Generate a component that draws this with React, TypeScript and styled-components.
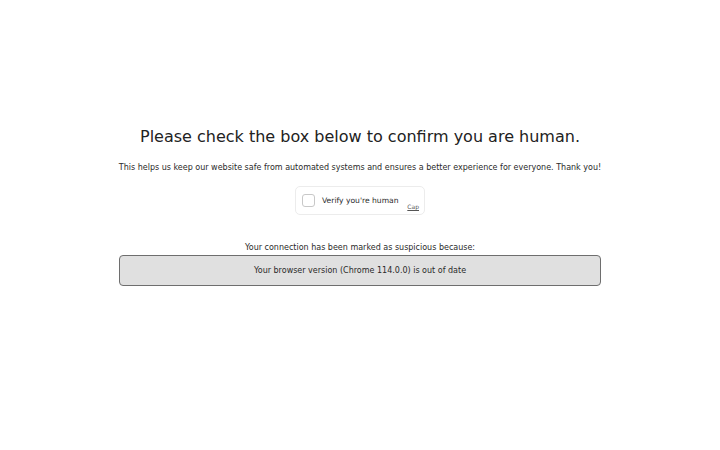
import React from "react";
import styled, { createGlobalStyle } from "styled-components";

const Global = createGlobalStyle`
  html, body { margin: 0; padding: 0; background: #ffffff; }
  body { font-family: "DejaVu Sans", "Liberation Sans", sans-serif; color: #222; }
`;

const Page = styled.main`
  display: flex;
  justify-content: center;
  padding-top: 126px;
`;

const Column = styled.div`
  display: flex;
  flex-direction: column;
  align-items: center;
  width: 482px;
`;

const Title = styled.h1`
  margin: 0;
  font-size: 16px;
  font-weight: 400;
  line-height: 22px;
  color: #222;
  white-space: nowrap;
`;

const Lead = styled.p`
  margin: 14px 0 0;
  font-size: 8px;
  line-height: 11px;
  color: #2a2a2a;
  white-space: nowrap;
`;

const Widget = styled.div`
  margin-top: 13px;
  width: 130px;
  height: 29px;
  box-sizing: border-box;
  border: 1px solid #ececec;
  border-radius: 5px;
  background: #fff;
  display: flex;
  align-items: center;
  padding: 0 6px;
  position: relative;
`;

const Box = styled.span`
  width: 11px;
  height: 11px;
  border: 1px solid #c8c8c8;
  border-radius: 3px;
  background: #fff;
  flex: none;
`;

const Label = styled.span`
  margin-left: 7px;
  font-size: 7.6px;
  color: #2a2a2a;
`;

const Brand = styled.span`
  position: absolute;
  right: 5px;
  bottom: 4px;
  font-size: 6px;
  color: #555;
  text-decoration: underline;
`;

const Reason = styled.p`
  margin: 27px 0 0;
  font-size: 8px;
  line-height: 11px;
  color: #2a2a2a;
`;

const Notice = styled.div`
  margin-top: 2px;
  width: 100%;
  height: 31px;
  box-sizing: border-box;
  border: 1px solid #6e6e6e;
  border-radius: 4px;
  background: #e0e0e0;
  display: flex;
  align-items: center;
  justify-content: center;
  font-size: 8px;
  color: #2a2a2a;
`;

export default function App() {
  return (
    <>
      <Global />
      <Page>
        <Column>
          <Title>Please check the box below to confirm you are human.</Title>
          <Lead>
            This helps us keep our website safe from automated systems and ensures a better
            experience for everyone. Thank you!
          </Lead>
          <Widget>
            <Box />
            <Label>Verify you're human</Label>
            <Brand>Cap</Brand>
          </Widget>
          <Reason>Your connection has been marked as suspicious because:</Reason>
          <Notice>Your browser version (Chrome 114.0.0) is out of date</Notice>
        </Column>
      </Page>
    </>
  );
}
